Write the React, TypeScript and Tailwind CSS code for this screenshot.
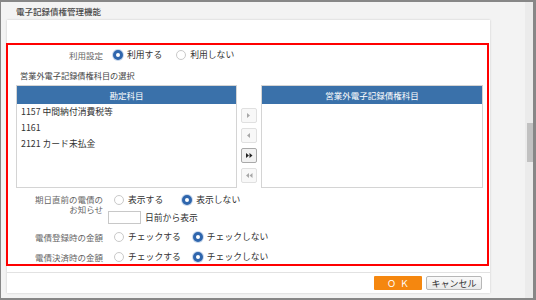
import React from 'react';

type Opt = { label: string; checked?: boolean };

const Radio: React.FC<{ checked?: boolean }> = ({ checked }) =>
  checked ? (
    <span className="block w-[10px] h-[10px] shrink-0 rounded-full border-[3px] border-[#2f66ad] bg-white shadow-[0_0_0_1px_#c9d8ec]" />
  ) : (
    <span className="block w-[10px] h-[10px] shrink-0 rounded-full border border-[#c9c9c9] bg-white" />
  );

const RadioGroup: React.FC<{ options: Opt[]; gap: string }> = ({ options, gap }) => (
  <div className="flex items-center">
    {options.map((o, i) => (
      <div key={o.label} className={`flex items-center ${i > 0 ? gap : ''}`}>
        <Radio checked={o.checked} />
        <span className="ml-[4px] text-[8.8px] leading-none text-[#333]">{o.label}</span>
      </div>
    ))}
  </div>
);

const Arrow: React.FC<{ dir: 'r' | 'l'; double?: boolean; active?: boolean }> = ({ dir, double, active }) => {
  const fill = active ? '#222' : '#a8a8a8';
  const tri = (x: number) =>
    dir === 'r' ? `${x},0 ${x + 3},2.5 ${x},5` : `${x + 3},0 ${x},2.5 ${x + 3},5`;
  return (
    <div
      className={`w-[16px] h-[15px] flex items-center justify-center rounded-[2px] border ${
        active ? 'border-[#a9a9a9] bg-[#f1f1f1]' : 'border-[#e0e0e0] bg-[#f8f8f8]'
      }`}
    >
      <svg width={double ? 7 : 4} height={5} viewBox={double ? '0 0 7 5' : '0 0 4 5'}>
        <polygon points={tri(0)} fill={fill} />
        {double && <polygon points={tri(3.5)} fill={fill} />}
      </svg>
    </div>
  );
};

const ListBox: React.FC<{ title: string; items: string[]; width: string }> = ({ title, items, width }) => (
  <div className={`${width} h-[103px] flex flex-col border border-[#d4d4d4]`}>
    <div className="h-[18px] shrink-0 bg-[#3a71aa] flex items-center justify-center text-[8.5px] text-white">
      {title}
    </div>
    <div className="flex-1 bg-white">
      {items.map((it) => (
        <div key={it} className="h-[16px] flex items-center pl-[4px] text-[8.8px] text-[#333]">
          {it}
        </div>
      ))}
    </div>
  </div>
);

export default function App() {
  return (
    <div className="w-[536px] h-[300px] flex flex-col bg-[#f3f3f3] border-t-2 border-b-2 border-l border-r-[3px] border-[#878787] font-['Noto_Sans_CJK_JP','Noto_Sans',sans-serif]">
      <div className="flex flex-1">
        <div className="flex-1 flex flex-col">
          <div className="h-[18px] flex items-center pl-[15px] text-[8.5px] font-medium text-[#4a4a4a]">
            電子記録債権管理機能
          </div>
          <div className="ml-[6px] w-[483px] h-[273px] bg-white shadow-[0_0_2px_rgba(0,0,0,0.18)] flex flex-col pt-[23px]">
            <div className="-ml-px w-[483px] h-[223px] border-2 border-[#ff0000] flex flex-col">
              {/* 利用設定 */}
              <div className="mt-[3px] h-[14px] flex items-center">
                <div className="w-[95px] text-right text-[8.5px] text-[#666]">利用設定</div>
                <div className="ml-[10px]">
                  <RadioGroup
                    gap="ml-[14px]"
                    options={[{ label: '利用する', checked: true }, { label: '利用しない' }]}
                  />
                </div>
              </div>

              <div className="mt-[7px] h-[12px] flex items-center pl-[12px] text-[8.2px] text-[#444]">
                営業外電子記録債権科目の選択
              </div>

              <div className="mt-[4px] ml-[8px] flex">
                <ListBox
                  width="w-[221px]"
                  title="勘定科目"
                  items={['1157 中間納付消費税等', '1161', '2121 カード未払金']}
                />
                <div className="mx-[4px] pt-[23px] flex flex-col gap-[5px]">
                  <Arrow dir="r" />
                  <Arrow dir="l" />
                  <Arrow dir="r" double active />
                  <Arrow dir="l" double />
                </div>
                <ListBox width="w-[222px]" title="営業外電子記録債権科目" items={[]} />
              </div>

              {/* 期日直前の電債のお知らせ */}
              <div className="mt-[7px] flex items-start">
                <div className="w-[95px] flex justify-end">
                  <div className="w-[69px] text-right text-[8.5px] leading-[9.5px] text-[#666]">
                    期日直前の電債のお知らせ
                  </div>
                </div>
                <div className="flex flex-col">
                  <div className="h-[10px] ml-[11px] flex items-center">
                    <RadioGroup
                      gap="ml-[19px]"
                      options={[{ label: '表示する' }, { label: '表示しない', checked: true }]}
                    />
                  </div>
                  <div className="mt-[6px] h-[13px] ml-[5px] flex items-center">
                    <div className="w-[33px] h-[13px] border border-[#c8c8c8] bg-white" />
                    <span className="ml-[4px] text-[8.8px] text-[#333]">日前から表示</span>
                  </div>
                </div>
              </div>

              <div className="mt-[7px] h-[12px] flex items-center">
                <div className="w-[95px] text-right text-[8.5px] text-[#666]">電債登録時の金額</div>
                <div className="ml-[11px]">
                  <RadioGroup
                    gap="ml-[12px]"
                    options={[{ label: 'チェックする' }, { label: 'チェックしない', checked: true }]}
                  />
                </div>
              </div>

              <div className="mt-[8px] h-[12px] flex items-center">
                <div className="w-[95px] text-right text-[8.5px] text-[#666]">電債決済時の金額</div>
                <div className="ml-[11px]">
                  <RadioGroup
                    gap="ml-[12px]"
                    options={[{ label: 'チェックする' }, { label: 'チェックしない', checked: true }]}
                  />
                </div>
              </div>
            </div>

            <div className="mt-[6px] border-t border-[#e2e2e2] flex justify-end pr-[8px] pt-[3px]">
              <button className="w-[48px] h-[14px] bg-[#f5870f] rounded-[1px] text-[9px] leading-none text-white tracking-[4px] pl-[4px]">
                ＯＫ
              </button>
              <button className="ml-[4px] w-[56px] h-[14px] rounded-[2px] border border-[#b7b7b7] bg-gradient-to-b from-[#fafafa] to-[#e9e9e9] text-[9px] leading-none text-[#333]">
                キャンセル
              </button>
            </div>
          </div>
        </div>

        <div className="w-[8px] bg-[#ebebeb] flex justify-end">
          <div className="mt-[121px] w-[6px] h-[39px] bg-[#c1c1c1]" />
        </div>
      </div>
    </div>
  );
}
